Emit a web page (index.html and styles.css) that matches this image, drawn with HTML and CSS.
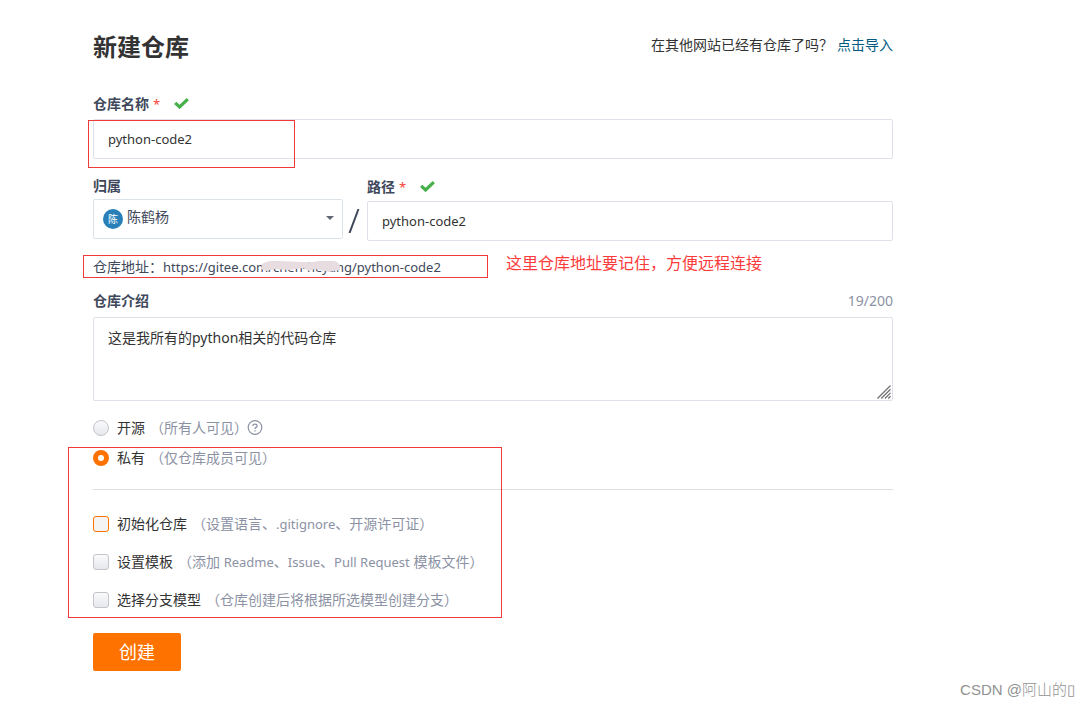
FILE: index.html
```html
<!DOCTYPE html>
<html lang="zh-CN">
<head>
<meta charset="utf-8">
<title>新建仓库</title>
<meta name="viewport" content="width=device-width, initial-scale=1">
<link rel="stylesheet" href="styles.css">
</head>
<body>
<main class="page">
  <header class="head">
    <h1 class="title">新建仓库</h1>
    <p class="import">在其他网站已经有仓库了吗？<a class="link" href="#">点击导入</a></p>
  </header>
  <form class="form">
    <div class="field name-field">
      <label class="label" for="name">仓库名称 <span class="required">*</span>
        <svg class="tick" viewBox="0 0 15 11" aria-hidden="true"><path d="M1.200 4.800 5.600 9 13.800 1.200" fill="none" stroke="#46b04a" stroke-width="3.200"/></svg>
      </label>
      <input class="input latin" id="name" type="text" value="python-code2">
      <span class="mark mark-name"></span>
    </div>
    <div class="path-row">
      <div class="owner">
        <label class="label" for="owner">归属</label>
        <div class="select-wrap">
          <select class="input select" id="owner"><option>陈鹤杨</option></select>
          <span class="avatar" aria-hidden="true">陈</span>
          <span class="caret"></span>
        </div>
      </div>
      <svg class="slash" viewBox="0 0 12 24" aria-hidden="true"><path d="M1.500 24 10.500 0" stroke="#40485b" stroke-width="2"/></svg>
      <div class="field path">
        <label class="label" for="path">路径 <span class="required">*</span>
          <svg class="tick" viewBox="0 0 15 11" aria-hidden="true"><path d="M1.200 4.800 5.600 9 13.800 1.200" fill="none" stroke="#46b04a" stroke-width="3.200"/></svg>
        </label>
        <input class="input latin" id="path" type="text" value="python-code2">
      </div>
    </div>
    <div class="address">
      <span>仓库地址：<span class="latin">https://gitee.com/chen-heyang/python-code2</span></span>
      <svg class="smear" viewBox="0 0 86 14" aria-hidden="true"><path d="M1 4Q8 0 17 1L42 2Q50 3 57 1L73 1Q80 2 79 10L68 12 54 9 48 11 42 8 28 10 13 9 5 11 0 9Z" fill="#e7dce0"/></svg>
      <span class="mark mark-address"></span>
      <span class="note">这里仓库地址要记住，方便远程连接</span>
    </div>
    <div class="intro">
      <div class="intro-head"><label class="label" for="intro">仓库介绍</label><span class="count">19/200</span></div>
      <div class="area-wrap">
        <textarea class="input area" id="intro">这是我所有的python相关的代码仓库</textarea>
        <svg class="grip" viewBox="0 0 15 15" aria-hidden="true"><path d="M.5 14.500 14.500 .5M4.500 14.500 14.500 4.500M8.500 14.500 14.500 8.500M12 14.500 14.500 12" stroke="#707070" stroke-width="1.300"/></svg>
      </div>
    </div>
    <div class="options">
      <div class="visibility">
        <label class="option"><input class="radio" type="radio" name="visibility"><span>开源</span><span class="hint">（所有人可见）</span>
          <svg class="help" viewBox="0 0 16 16" aria-hidden="true"><circle cx="8" cy="7.500" r="6.800" fill="none" stroke="#8c92a4" stroke-width="1.200"/><path d="M5.900 6C5.900 3.400 10.100 3.400 10.100 5.900 10.100 7.400 8 7.400 8 9.100M8 10.200V11.500" fill="none" stroke="#8c92a4" stroke-width="1.300"/></svg>
        </label>
        <label class="option"><input class="radio" type="radio" name="visibility" checked><span>私有</span><span class="hint">（仅仓库成员可见）</span></label>
      </div>
      <div class="setup">
        <label class="option"><input class="check check-active" type="checkbox"><span>初始化仓库</span><span class="hint">（设置语言、<span class="latin">.gitignore</span>、开源许可证）</span></label>
        <label class="option"><input class="check" type="checkbox"><span>设置模板</span><span class="hint">（添加 <span class="latin">Readme</span>、<span class="latin">Issue</span>、<span class="latin">Pull Request</span> 模板文件）</span></label>
        <label class="option"><input class="check" type="checkbox"><span>选择分支模型</span><span class="hint">（仓库创建后将根据所选模型创建分支）</span></label>
      </div>
      <span class="mark mark-options"></span>
    </div>
    <button class="submit" type="button">创建</button>
  </form>
</main>
<footer class="watermark">CSDN @阿山的▯</footer>
</body>
</html>
```
FILE: styles.css
```css
* { box-sizing: border-box; }
body {
  margin: 0;
  background: #fff;
  color: #333;
  font: 14px/20px "Noto Sans", "Noto Sans CJK SC", sans-serif;
}
.page { max-width: 893px; padding: 27px 0 0 93px; }
.head { display: flex; justify-content: space-between; align-items: center; height: 40px; }
.title { margin: 0; font-size: 24px; line-height: 40px; font-weight: 700; }
.import { margin: 0; padding-bottom: 4px; }
.link { margin-left: 4px; color: #005980; text-decoration: none; }
.form { margin-top: 27px; }
.field, .owner { position: relative; display: flex; flex-direction: column; }
.label { display: flex; align-items: center; height: 20px; color: #40485b; font-weight: 700; }
.required { margin-left: 4px; color: #f44336; font-size: 13px; font-weight: 400; }
.tick { width: 15px; height: 11px; margin: 0 0 2px 14px; }
.input {
  display: block;
  width: 100%;
  height: 40px;
  margin: 0;
  padding: 0 14px;
  border: 1px solid #dfe0e9;
  border-radius: 2px;
  background: #fff;
  color: #333;
  font: inherit;
  outline: 0;
}
.latin { font-size: 13px; }
.name-field { gap: 5px; }
.path-row { display: flex; margin-top: 17px; }
.owner { flex: 0 0 250px; gap: 3px; }
.select-wrap { position: relative; }
.select { appearance: none; padding: 0 30px 4px 33px; color: #40485b; border-color: #dce3e8; }
.avatar {
  position: absolute;
  left: 10px;
  top: 10px;
  width: 20px;
  height: 20px;
  border-radius: 50%;
  background: #2980b9;
  color: #fff;
  font-size: 10px;
  text-align: center;
}
.caret {
  position: absolute;
  right: 9px;
  top: 17px;
  border: 4px solid transparent;
  border-top-color: #5f6777;
  border-bottom: 0;
}
.slash { flex: none; width: 12px; height: 24px; margin: 33px 7px 0 5px; }
.path { flex: 1; gap: 4px; padding-top: 1px; }
.address { position: relative; height: 20px; margin-top: 16px; color: #40485b; }
.smear { position: absolute; left: 168px; top: 3px; width: 86px; height: 14px; }
.mark { position: absolute; border: 1px solid #f03a3a; pointer-events: none; }
.mark-name { left: -5px; top: 26px; width: 207px; height: 48px; }
.mark-address { left: -10px; top: -2px; width: 405px; height: 23px; }
.note { position: absolute; left: 413px; top: -4px; color: #fb3b3b; font-size: 16px; white-space: nowrap; }
.intro { margin-top: 14px; }
.intro-head { display: flex; justify-content: space-between; }
.count { color: #8c92a4; }
.area-wrap { position: relative; margin-top: 6px; }
.area { height: 84px; padding: 10px 14px; resize: none; }
.grip { position: absolute; right: 2px; bottom: 2px; width: 14px; height: 14px; }
.options { position: relative; margin-top: 17px; }
.visibility { display: grid; gap: 10px; padding-bottom: 21px; border-bottom: 1px solid #dce0e5; }
.setup { display: grid; gap: 18px; padding-top: 24px; }
.option { display: flex; align-items: center; height: 20px; }
.hint { margin-left: 5px; color: #8c92a4; }
.help { width: 16px; height: 16px; margin-left: -1px; }
.radio, .check {
  appearance: none;
  flex: none;
  width: 16px;
  height: 16px;
  margin: 0 8px 0 0;
  border: 1px solid #c3c5ca;
  background: linear-gradient(#fafafb, #e6e8ed);
}
.radio { border-radius: 50%; }
.radio:checked { border: 5px solid #fe7300; background: #fff; }
.check { border-radius: 3px; }
.check-active { border-color: #fe7300; background: #f4f4f5; }
.mark-options { left: -25px; top: 29px; width: 434px; height: 171px; }
.submit {
  display: block;
  width: 88px;
  height: 38px;
  margin-top: 23px;
  padding: 0;
  border: 0;
  border-radius: 2px;
  background: #fe7300;
  color: #fff;
  font: 18px/38px "Noto Sans", "Noto Sans CJK SC", sans-serif;
}
.watermark {
  padding: 9px 14px 0 0;
  color: #929292;
  font: 300 15px/20px "Liberation Sans", "Noto Sans CJK SC", sans-serif;
  text-align: right;
}
```
